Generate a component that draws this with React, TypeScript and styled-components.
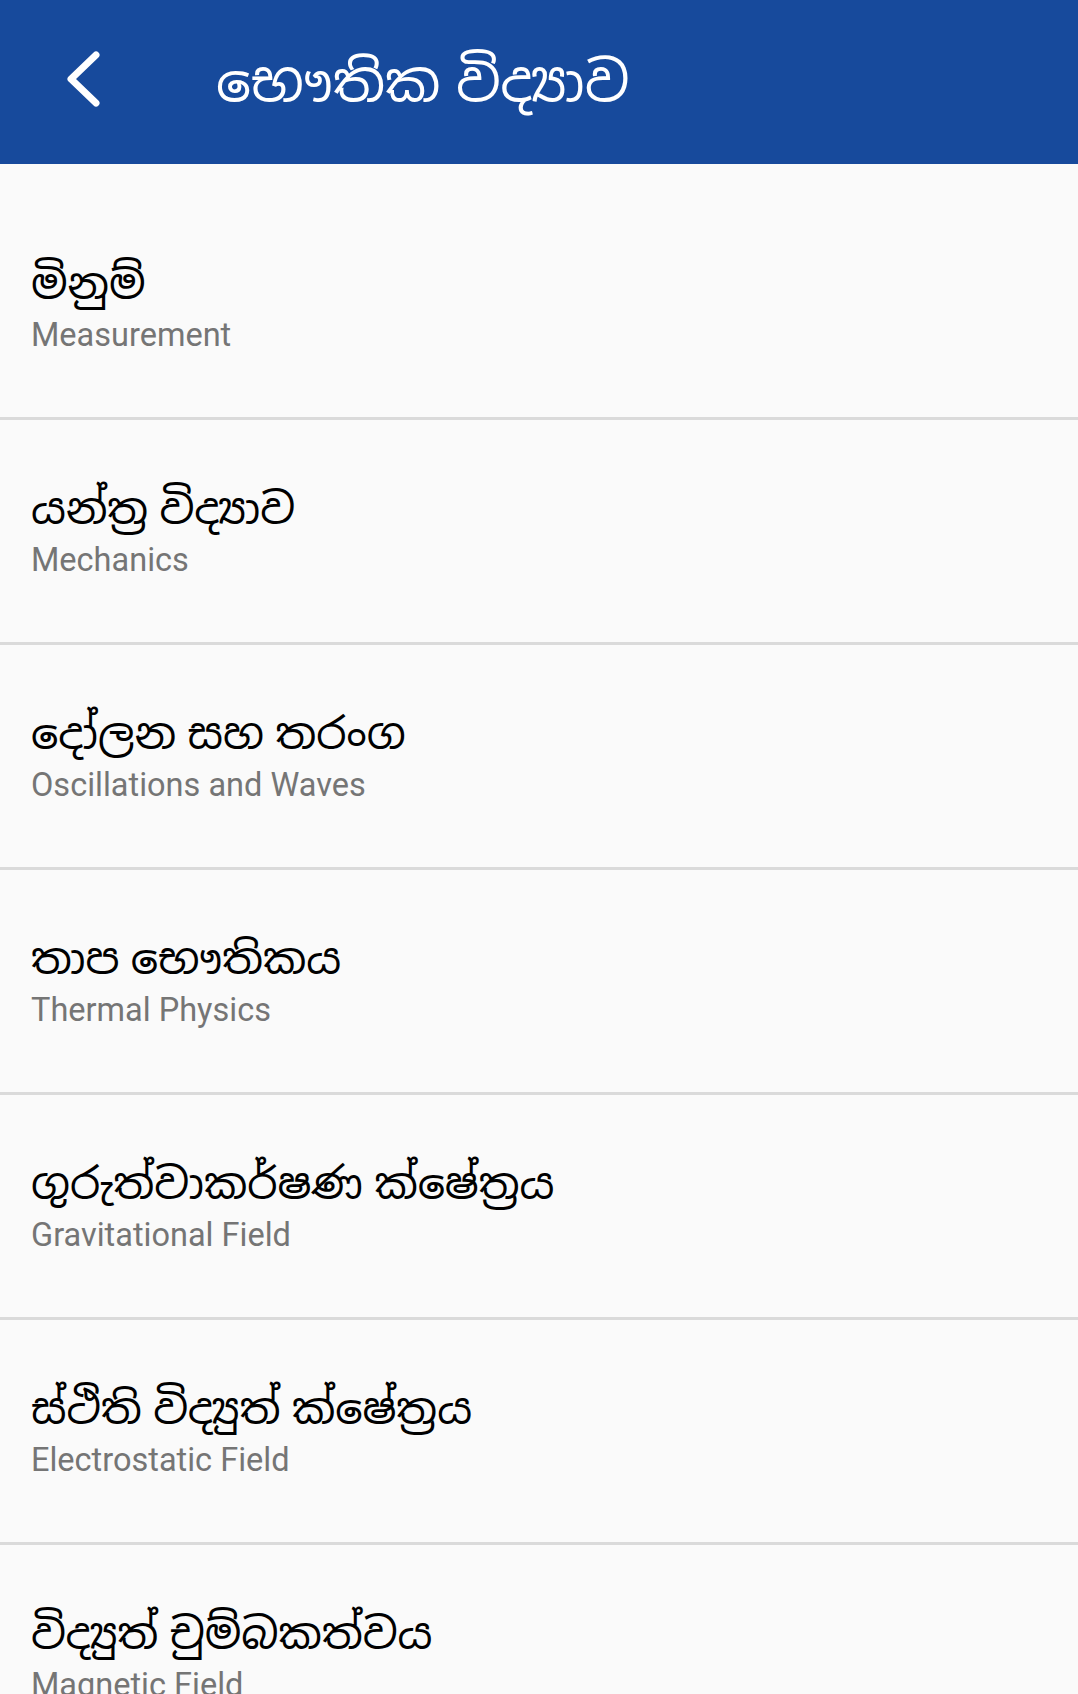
import React from "react";
import styled, { createGlobalStyle } from "styled-components";

const Global = createGlobalStyle`
  html, body { margin: 0; padding: 0; background: #fafafa; }
  body { font-family: Roboto, "Noto Sans Sinhala", "Noto Sans", sans-serif; }
`;

const Page = styled.div`
  width: 1078px;
  min-height: 1694px;
  background: #fafafa;
  overflow: hidden;
`;

const Header = styled.header`
  height: 164px;
  background: #174a9c;
  display: flex;
  align-items: center;
`;

const BackButton = styled.button`
  width: 216px;
  height: 164px;
  flex: none;
  border: 0;
  background: transparent;
  padding: 0 0 6px 66px;
  display: flex;
  align-items: center;
  cursor: pointer;
`;

const Title = styled.h1`
  margin: 0 0 2px 0;
  color: #ffffff;
  font-family: "Noto Sans Sinhala", "Noto Sans", sans-serif;
  font-weight: 400;
  font-size: 55px;
  word-spacing: -12px;
  line-height: 1;
  white-space: nowrap;
`;

const List = styled.ul`
  list-style: none;
  margin: 0;
  padding: 0;
`;

const Item = styled.li<{ $first?: boolean }>`
  height: ${(p) => (p.$first ? "253px" : "225px")};
  padding-top: ${(p) => (p.$first ? "30px" : "0")};
  border-top: ${(p) => (p.$first ? "0" : "3px solid #dadada")};
  padding-left: 31px;
  display: flex;
  flex-direction: column;
  justify-content: center;
  box-sizing: border-box;
`;

const Sinhala = styled.div`
  color: #000000;
  font-family: "Noto Sans Sinhala", "Noto Sans", sans-serif;
  font-size: 43px;
  word-spacing: -10px;
  line-height: 58px;
  white-space: nowrap;
`;

const English = styled.div`
  color: #757575;
  font-family: Roboto, sans-serif;
  font-size: 32.5px;
  line-height: 44px;
`;

const items = [
  ["මිනුම්", "Measurement"],
  ["යන්ත්‍ර විද්‍යාව", "Mechanics"],
  ["දෝලන සහ තරංග", "Oscillations and Waves"],
  ["තාප භෞතිකය", "Thermal Physics"],
  ["ගුරුත්වාකර්ෂණ ක්ෂේත්‍රය", "Gravitational Field"],
  ["ස්ථිති විද්‍යුත් ක්ෂේත්‍රය", "Electrostatic Field"],
  ["විද්‍යුත් චුම්බකත්වය", "Magnetic Field"],
];

export default function App() {
  return (
    <Page>
      <Global />
      <Header>
        <BackButton aria-label="back">
          <svg width="40" height="60" viewBox="0 0 40 60">
            <polyline
              points="30,6 5,30 30,54"
              fill="none"
              stroke="#ffffff"
              strokeWidth="7"
              strokeLinecap="round"
              strokeLinejoin="round"
            />
          </svg>
        </BackButton>
        <Title>භෞතික විද්‍යාව</Title>
      </Header>
      <List>
        {items.map(([si, en], i) => (
          <Item key={en} $first={i === 0}>
            <Sinhala>{si}</Sinhala>
            <English>{en}</English>
          </Item>
        ))}
      </List>
    </Page>
  );
}
